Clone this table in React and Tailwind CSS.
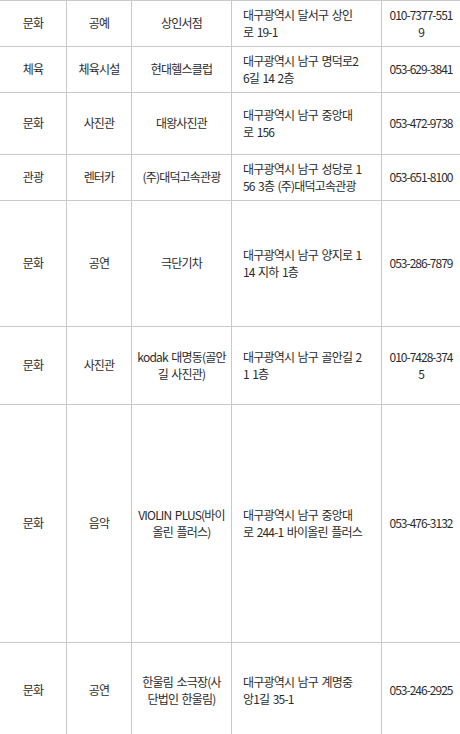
import React from "react";

const rows = [
  { h: 46, a: "문화", b: "공예", c: ["상인서점"], d: ["대구광역시 달서구 상인", "로 19-1"], e: ["010-7377-551", "9"] },
  { h: 46, a: "체육", b: "체육시설", c: ["현대헬스클럽"], d: ["대구광역시 남구 명덕로2", "6길 14 2층"], e: ["053-629-3841"] },
  { h: 62, a: "문화", b: "사진관", c: ["대왕사진관"], d: ["대구광역시 남구 중앙대", "로 156"], e: ["053-472-9738"] },
  { h: 46, a: "관광", b: "렌터카", c: ["(주)대덕고속관광"], d: ["대구광역시 남구 성당로 1", "56 3층 (주)대덕고속관광"], e: ["053-651-8100"] },
  { h: 126, a: "문화", b: "공연", c: ["극단기차"], d: ["대구광역시 남구 양지로 1", "14 지하 1층"], e: ["053-286-7879"] },
  { h: 78, a: "문화", b: "사진관", c: ["kodak 대명동(골안", "길 사진관)"], d: ["대구광역시 남구 골안길 2", "1 1층"], e: ["010-7428-374", "5"] },
  { h: 238, a: "문화", b: "음악", c: ["VIOLIN PLUS(바이", "올린 플러스)"], d: ["대구광역시 남구 중앙대", "로 244-1 바이올린 플러스"], e: ["053-476-3132"] },
  { h: 96, a: "문화", b: "공연", c: ["한울림 소극장(사", "단법인 한울림)"], d: ["대구광역시 남구 계명중", "앙1길 35-1"], e: ["053-246-2925"] },
];

function Lines({ items }) {
  return (
    <span>
      {items.map((t, i) => (
        <React.Fragment key={i}>
          {i > 0 && <br />}
          {t}
        </React.Fragment>
      ))}
    </span>
  );
}

export default function App() {
  return (
    <div
      className="w-[460px] bg-white text-[#2b2b2b] text-[12px] leading-[16.7px] tracking-[-0.8px] [word-spacing:1.5px] border-t border-[#c9c9c9] overflow-hidden"
      style={{ fontFamily: '"Noto Sans CJK KR", "Noto Sans", sans-serif' }}
    >
      {rows.map((r, i) => (
        <div
          key={i}
          className="grid grid-cols-[67px_65px_100px_150px_78px] border-b border-[#c9c9c9]"
          style={{ height: r.h }}
        >
          <div className="flex items-center justify-center text-center border-r border-[#c9c9c9] whitespace-nowrap">
            {r.a}
          </div>
          <div className="flex items-center justify-center text-center border-r border-[#c9c9c9] whitespace-nowrap">
            {r.b}
          </div>
          <div className="flex items-center justify-center text-center border-r border-[#c9c9c9] whitespace-nowrap">
            <Lines items={r.c} />
          </div>
          <div className="flex items-center text-left border-r border-[#c9c9c9] pl-[11px] whitespace-nowrap">
            <Lines items={r.d} />
          </div>
          <div className="flex items-center justify-center text-center whitespace-nowrap tracking-[-1px]">
            <Lines items={r.e} />
          </div>
        </div>
      ))}
    </div>
  );
}
